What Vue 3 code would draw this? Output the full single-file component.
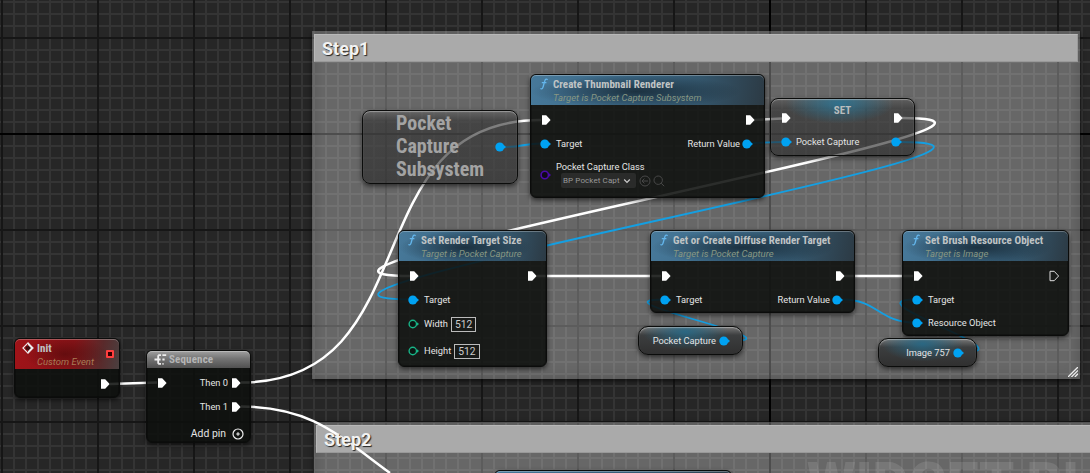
<template>
  <div class="graph">
    <div class="grid"></div>

    <section v-for="box in comments" :key="box.title" class="comment" :style="place(box)">
      <h2><span>{{ box.title }}</span></h2>
      <svg v-if="box.grip" class="grip" viewBox="0 0 10 10">
        <path d="M0 10 10 0M3.4 10 10 3.4M6.8 10 10 6.8" />
      </svg>
    </section>

    <div class="watermark">WIDGET BL</div>

    <svg class="wires" viewBox="0 0 1090 473">
      <path v-for="(wire, i) in wires" :key="i" :class="wire.type" :d="wire.d" />
    </svg>

    <article v-for="node in nodes" :key="node.id" class="node" :class="node.kind" :style="place(node)">
      <header v-if="node.title">
        <svg v-if="node.icon === 'func'" class="icon func" viewBox="0 0 10 12">
          <path d="M8.6 1.7C7.6.6 6.3 1 5.8 2.8L4 9.2C3.6 10.8 2.6 11.3 1.4 10.5M2.8 4.7H7.4" />
        </svg>
        <svg v-else-if="node.icon === 'event'" class="icon event" viewBox="0 0 12 12">
          <path class="line" d="M6 .9.9 6 6 11.1 11.1 6Z" />
          <path class="solid" d="M6 .9 11.1 6 6 11.1Z" />
          <path class="hole" d="M3.8 4.3H6V2.9L9 6 6 9.1V7.7H3.8Z" />
        </svg>
        <svg v-else-if="node.icon === 'sequence'" class="icon seq" viewBox="0 0 13 11">
          <path d="M.5 5.5H6.6M4.2 1.2V9.8M4.2 1.2H7M4.2 9.8H7M8.4 1.2H12.2M8.4 5.5H10.6M8.4 9.8H9.6" />
        </svg>
        <div class="heading">
          <strong>{{ node.title }}</strong>
          <em v-if="node.subtitle">{{ node.subtitle }}</em>
        </div>
        <i v-if="node.kind === 'red'" class="delegate"></i>
      </header>

      <p v-if="node.big" class="big">
        <span v-for="word in node.big" :key="word">{{ word }}</span>
      </p>

      <div v-for="(row, r) in node.rows" :key="r" class="row" :class="row.cls" :style="{ height: row.h + 'px' }">
        <div v-for="side in ['left', 'right']" :key="side" class="side" :class="[side, row[side]?.pin === 'object' && 'has-data']">
          <template v-if="row[side]">
            <svg v-if="row[side].pin" class="pin" :class="row[side].pin" viewBox="0 0 11 12">
              <path v-if="row[side].pin.startsWith('exec')" d="M1 1.3H5.2L9.6 6 5.2 10.7H1Z" />
              <template v-else>
                <circle cx="4.8" cy="6" :r="row[side].pin === 'object' ? 4.5 : 3.7" />
                <path class="tick" d="M9 4.2 11 6 9 7.8Z" />
              </template>
            </svg>
            <svg v-if="row[side].add" class="add" viewBox="0 0 12 12">
              <circle cx="6" cy="6" r="5" />
              <path d="M6 4.2V7.8M4.2 6H7.8" />
            </svg>
            <span v-if="row[side].label" class="label">{{ row[side].label }}</span>
            <span v-if="row[side].value" class="value">{{ row[side].value }}</span>
            <div v-if="row[side].picker" class="picker">
              <span class="label">Pocket Capture Class</span>
              <div class="controls">
                <span class="select">
                  <b>BP Pocket Capt</b>
                  <svg viewBox="0 0 8 6"><path d="M1.2 1.5 4 4.3 6.8 1.5" /></svg>
                </span>
                <svg class="tool" viewBox="0 0 12 12"><circle cx="6" cy="6" r="5" /><path d="M9 6H3M5.4 3.6 3 6 5.4 8.4" /></svg>
                <svg class="tool" viewBox="0 0 12 12"><circle cx="5.2" cy="5.2" r="4.2" /><path d="M8.2 8.2 11.2 11.2" /></svg>
              </div>
            </div>
          </template>
        </div>
      </div>
    </article>
  </div>
</template>

<script setup>
const comments = [
  { title: 'Step1', x: 312, y: 31, w: 768, h: 348, grip: true },
  { title: 'Step2', x: 314, y: 422, w: 800, h: 80 },
]

const wires = [
  { type: 'exec', d: 'M110 384 L157 382.5' },
  { type: 'exec', d: curve(241, 382.5, 541, 120, 190) },
  { type: 'exec', d: 'M241 406.5 C310 406.5 337 434 390 473' },
  { type: 'exec', d: 'M754 120 L782 118.5' },
  { type: 'exec', d: curve(902, 118, 411, 276, 215) },
  { type: 'exec', d: 'M537 276H661' },
  { type: 'exec', d: 'M845 276H913' },
  { type: 'data', d: curve(505, 147, 541, 143.5, 16) },
  { type: 'data', d: 'M753 143 L782 142' },
  { type: 'data', d: curve(901, 142, 411, 299.5, 215) },
  { type: 'data', d: curve(730, 341, 664, 299.5, 76) },
  { type: 'data', d: curve(843, 299.5, 914, 322.5, 34) },
  { type: 'data', d: curve(964, 352.5, 915, 299.5, 66) },
]

const exec = { pin: 'exec' }
const target = { pin: 'object', label: 'Target' }

const nodes = [
  {
    id: 'init', kind: 'red', icon: 'event', title: 'Init', subtitle: 'Custom Event', x: 14, y: 338, w: 106, h: 60,
    rows: [{ h: 30, right: exec }],
  },
  {
    id: 'sequence', kind: 'gray', icon: 'sequence', title: 'Sequence', x: 146, y: 350, w: 105, h: 93,
    rows: [
      { h: 29, left: exec, right: { pin: 'exec', label: 'Then 0' } },
      { h: 19, right: { pin: 'exec', label: 'Then 1' } },
      { h: 35, cls: 'add-row', right: { label: 'Add pin', add: true } },
    ],
  },
  {
    id: 'subsystem', kind: 'glass', big: ['Pocket', 'Capture', 'Subsystem'], x: 362, y: 110, w: 156, h: 74,
    rows: [{ h: 72, cls: 'over', right: { pin: 'object' } }],
  },
  {
    id: 'create', kind: 'blue', icon: 'func', title: 'Create Thumbnail Renderer', subtitle: 'Target is Pocket Capture Subsystem',
    x: 530, y: 74, w: 235, h: 124,
    rows: [
      { h: 30, left: exec, right: exec },
      { h: 17, left: target, right: { pin: 'object', label: 'Return Value' } },
      { h: 46, cls: 'picker-row', left: { pin: 'class', picker: true } },
    ],
  },
  {
    id: 'set', kind: 'glass set', title: 'SET', x: 770, y: 98, w: 145, h: 58,
    rows: [
      { h: 10, left: exec, right: exec },
      { h: 37, left: { pin: 'object', label: 'Pocket Capture' }, right: { pin: 'object' } },
    ],
  },
  {
    id: 'size', kind: 'blue', icon: 'func', title: 'Set Render Target Size', subtitle: 'Target is Pocket Capture',
    x: 398, y: 230, w: 149, h: 137,
    rows: [
      { h: 30, left: exec, right: exec },
      { h: 17, left: target },
      { h: 32, left: { pin: 'int', label: 'Width', value: '512' } },
      { h: 22, left: { pin: 'int', label: 'Height', value: '512' } },
    ],
  },
  {
    id: 'diffuse', kind: 'blue', icon: 'func', title: 'Get or Create Diffuse Render Target', subtitle: 'Target is Pocket Capture',
    x: 650, y: 230, w: 205, h: 83,
    rows: [
      { h: 30, left: exec, right: exec },
      { h: 17, left: target, right: { pin: 'object', label: 'Return Value' } },
    ],
  },
  {
    id: 'brush', kind: 'blue', icon: 'func', title: 'Set Brush Resource Object', subtitle: 'Target is Image',
    x: 902, y: 230, w: 167, h: 106,
    rows: [
      { h: 30, left: exec, right: { pin: 'exec-open' } },
      { h: 17, left: target },
      { h: 29, left: { pin: 'object', label: 'Resource Object' } },
    ],
  },
  {
    id: 'capture', kind: 'glass pill', x: 638, y: 326, w: 105, h: 29,
    rows: [{ h: 28, right: { pin: 'object', label: 'Pocket Capture' } }],
  },
  {
    id: 'image', kind: 'glass pill', x: 878, y: 338, w: 99, h: 29,
    rows: [{ h: 28, right: { pin: 'object', label: 'Image 757' } }],
  },
  { id: 'next', kind: 'blue', title: ' ', x: 494, y: 470, w: 238, h: 60, rows: [] },
]

// Horizontal tangents on both ends, t is how far they reach.
function curve(x1, y1, x2, y2, t) {
  return `M${x1} ${y1} C${x1 + t} ${y1} ${x2 - t} ${y2} ${x2} ${y2}`
}

function place({ x, y, w, h }) {
  return { left: x + 'px', top: y + 'px', width: w + 'px', height: h + 'px' }
}
</script>

<style>
body {
  margin: 0;
  background: #262626;
}
</style>

<style scoped>
.graph {
  position: relative;
  width: 1090px;
  height: 473px;
  overflow: hidden;
  font-family: Roboto, "Liberation Sans", sans-serif;
  color: #e4e4e4;
}

.grid {
  position: absolute;
  inset: 0;
  background:
    linear-gradient(#000, #000) 769px 0 / 2px 100% no-repeat,
    linear-gradient(#000, #000) 0 133px / 100% 2px no-repeat,
    linear-gradient(90deg, #161616 2px, transparent 2px) 1px 0 / 96px 96px,
    linear-gradient(#161616 2px, transparent 2px) 0 37px / 96px 96px,
    linear-gradient(90deg, #343434 2px, transparent 2px) 1px 0 / 12px 12px,
    linear-gradient(#343434 2px, transparent 2px) 0 1px / 12px 12px,
    #262626;
}

.comment {
  position: absolute;
  box-sizing: border-box;
  padding: 3px 2px 0;
  background: rgba(255, 255, 255, .3);
  box-shadow: 0 2px 5px rgba(0, 0, 0, .65), inset 0 0 14px rgba(0, 0, 0, .2);
}

.comment h2 {
  margin: 0;
  height: 28px;
  padding-left: 7px;
  box-sizing: border-box;
  border: 1px solid #b8b8b8;
  border-right-color: #999;
  border-bottom-color: #999;
  background: #aaa;
  color: #f2f2f2;
  font-size: 18px;
  font-weight: 700;
  line-height: 27px;
  text-shadow: 1px 1px 1px #222;
}

/* captions stay above the wires that cross a comment bar */
.comment h2 span {
  position: relative;
  z-index: 1;
}

.grip {
  position: absolute;
  right: 2px;
  bottom: 2px;
  width: 10px;
  height: 10px;
  stroke: #eee;
  stroke-width: 1.3;
}

.watermark {
  position: absolute;
  left: 807px;
  top: 451px;
  color: rgba(255, 255, 255, .11);
  font-size: 56px;
  font-weight: 900;
  line-height: 64px;
  white-space: nowrap;
}

.wires {
  position: absolute;
  inset: 0;
  width: 1090px;
  height: 473px;
  fill: none;
}

.wires .exec {
  stroke: #fff;
  stroke-width: 2.5;
}

.wires .data {
  stroke: #149fe2;
  stroke-width: 1.8;
}

.node {
  position: absolute;
  box-sizing: border-box;
  border: 1px solid #0b0c0b;
  border-radius: 6px;
  background: rgba(14, 16, 14, .88);
  box-shadow: 0 2px 5px rgba(0, 0, 0, .6), inset 0 0 0 1px rgba(0, 0, 0, .25);
}

header {
  position: relative;
  display: flex;
  height: 30px;
  padding: 3px 0 0 8px;
  box-sizing: border-box;
  border-radius: 5px 5px 0 0;
  box-shadow: inset 0 1px 0 rgba(255, 255, 255, .28);
}

.blue header {
  background:
    radial-gradient(ellipse 45% 55% at 45% 55%, rgba(18, 32, 42, .75), transparent),
    linear-gradient(100deg, #47799a 0%, #3a6582 45%, #34566c 72%, #2c3a44 100%);
}

.red header {
  background:
    radial-gradient(ellipse 40% 60% at 48% 50%, rgba(60, 5, 5, .5), transparent),
    linear-gradient(100deg, #a01318 0%, #8c1519 55%, #592a2b 82%, #4a4040 100%);
}

.gray header {
  height: 17px;
  padding-top: 2px;
  background: linear-gradient(#a0a0a0, #747474 45%, #505050);
}

.heading {
  display: flex;
  flex-direction: column;
  white-space: nowrap;
}

.heading strong {
  color: #c0c4c5;
  font-size: 11px;
  font-weight: 700;
  font-stretch: 75%;
  letter-spacing: .03px;
  line-height: 13px;
}

.heading em {
  color: #879783;
  font-size: 9.5px;
  line-height: 13px;
}

.red em { color: #a97c56; }
.gray strong { color: #b5b5b5; letter-spacing: .15px; }

.icon {
  flex: none;
  fill: none;
}

.func {
  width: 10px;
  height: 12px;
  margin-right: 4px;
  stroke: #64b6ec;
  stroke-width: 1.3;
}

.event {
  width: 12px;
  height: 12px;
  margin: 0 3px 0 -1px;
}

.event .line { stroke: #eee; stroke-width: 1.1; }
.event .solid { fill: #eee; }
.event .hole { fill: #3d0b0d; }

.seq {
  width: 13px;
  height: 11px;
  margin: 1px 2px 0 -1px;
  stroke: #eee;
  stroke-width: 1.8;
}

.delegate {
  width: 4px;
  height: 4px;
  margin: 8px 5px 0 auto;
  border: 2px solid #ff3e3e;
  border-radius: 1px;
  background: #300;
}

.row {
  display: flex;
  align-items: center;
  justify-content: space-between;
}

.side {
  display: flex;
  align-items: center;
  gap: 5px;
}

.left { padding-left: 9px; }

.right {
  flex-direction: row-reverse;
  padding-right: 8px;
  gap: 3px;
}

.right.has-data {
  padding-right: 11px;
  gap: 2px;
}

.label {
  padding-bottom: 1px;
  font-size: 9.3px;
  white-space: nowrap;
}

.pin {
  flex: none;
  width: 11px;
  height: 12px;
  overflow: visible;
}

.left .exec,
.left .exec-open {
  margin-left: .5px;
}

.exec path { fill: #fff; }
.exec-open path { fill: none; stroke: #ddd; }
.object { fill: #00a2f2; }
.int { fill: #0c1512; stroke: #18b487; stroke-width: 1.4; }
.class { fill: #100818; stroke: #4a0aa8; stroke-width: 1.6; }
.int .tick, .class .tick { stroke: none; fill: #18b487; }
.class .tick { fill: #4a0aa8; }

.value {
  margin-left: -2px;
  padding: 0 3px;
  border: 1px solid #bbb;
  color: #ccc;
  font-size: 10.3px;
  line-height: 13px;
}

.add {
  width: 12px;
  height: 12px;
  fill: none;
  stroke: #eee;
  stroke-width: 1.2;
}

.add-row {
  justify-content: flex-end;
}

.add-row .right {
  gap: 6px;
  padding-right: 6px;
}

.add-row .label { font-size: 10.4px; }

.picker-row .side {
  height: 100%;
}

.picker {
  display: flex;
  flex-direction: column;
  margin-bottom: 1px;
}

.picker .label {
  padding-bottom: 0;
  line-height: 12px;
}

.picker .controls {
  display: flex;
  align-items: center;
  gap: 2px;
}

.select {
  display: flex;
  align-items: center;
  width: 75px;
  height: 15px;
  box-sizing: border-box;
  padding: 0 5px 0 2px;
  margin: 0 1px 0 5px;
  border-radius: 2px;
  background: #2a2b2a;
}

.select b {
  flex: 1;
  color: #999;
  font-size: 8px;
  font-weight: 400;
  letter-spacing: .1px;
  white-space: nowrap;
}

.select svg {
  width: 8px;
  height: 6px;
  fill: none;
  stroke: #ccc;
  stroke-width: 1.2;
}

.tool {
  width: 12px;
  height: 12px;
  fill: none;
  stroke: #484848;
}

.glass {
  border-radius: 8px;
  background: linear-gradient(rgba(100, 100, 100, .7), rgba(48, 48, 48, .62) 14%, rgba(42, 42, 42, .64));
  box-shadow: 0 2px 5px rgba(0, 0, 0, .6), inset 0 1px 1px rgba(255, 255, 255, .35);
}

.big {
  display: flex;
  flex-direction: column;
  margin: 1px 0 0 33px;
  color: #a3a3a3;
  font-size: 20px;
  font-weight: 700;
  font-stretch: 75%;
  line-height: 23px;
}

.over {
  position: absolute;
  top: 0;
  right: 0;
}

.set {
  background:
    radial-gradient(ellipse 38% 36% at 48% 8%, rgba(40, 120, 155, .8), transparent),
    linear-gradient(rgba(90, 90, 90, .7), rgba(48, 48, 48, .62) 18%, rgba(42, 42, 42, .64));
}

.set header {
  height: 14px;
  justify-content: center;
  padding: 5px 0 0;
  box-shadow: none;
}

.set strong { color: #b9bdbe; }

.set .right {
  padding-right: 10px;
}

.set .right.has-data {
  padding-right: 12px;
}

.set .left .object {
  margin-left: 1px;
  margin-right: -1px;
}

.pill {
  border-radius: 10px;
  background:
    radial-gradient(ellipse 42% 65% at 45% 18%, rgba(38, 105, 135, .9), transparent),
    linear-gradient(#777, #3c3e3f 30%, #303030);
}

.pill .right.has-data {
  padding-right: 12px;
  gap: 3px;
}
</style>
